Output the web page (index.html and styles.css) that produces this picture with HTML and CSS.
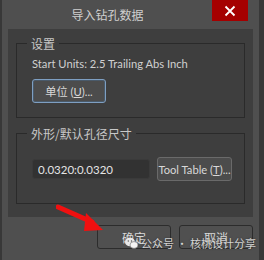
FILE: index.html
```html
<!DOCTYPE html>
<html lang="zh">
<head>
<meta charset="UTF-8">
<title>导入钻孔数据</title>
<link rel="stylesheet" href="styles.css">
</head>
<body>
<div class="window">
    <div class="titlebar">
        <span class="title">导入钻孔数据</span>
        <button class="close">
            <svg width="12" height="12" viewBox="0 0 12 12"><path d="M1.5 1.5 L10.5 10.5 M10.5 1.5 L1.5 10.5" stroke="#fff" stroke-width="1.8"/></svg>
        </button>
    </div>
    <div class="panel">
        <div class="group first">
            <div class="group-title">设置</div>
            <div class="units">Start Units: 2.5 Trailing Abs Inch</div>
            <button class="btn focus">单位 (<u>U</u>)...</button>
        </div>
        <div class="group second">
            <div class="group-title">外形/默认孔径尺寸</div>
            <div class="row">
                <input class="field" type="text" value="0.0320:0.0320">
                <button class="btn tool">Tool Table (<u>T</u>)...</button>
            </div>
        </div>
    </div>
    <div class="footer">
        <button class="btn action">确定</button>
        <button class="btn action">取消</button>
    </div>
    <svg class="arrow" width="60" height="34" viewBox="0 0 60 34">
        <path d="M2 3 L36 18" stroke="#f01010" stroke-width="5" stroke-linecap="round"/>
        <path d="M30 9 L47 26 L28 27 Z" fill="#f01010"/>
    </svg>
    <div class="watermark">
        <svg width="13" height="12" viewBox="0 0 13 12"><ellipse cx="5" cy="5" rx="5" ry="4.3" fill="#e8e8e8"/><ellipse cx="9" cy="8" rx="4" ry="3.4" fill="#f4f4f4" stroke="#666" stroke-width="0.6"/><circle cx="3.3" cy="4" r="0.7" fill="#555"/><circle cx="6.5" cy="4" r="0.7" fill="#555"/></svg>
        <span>公众号 · 核桃设计分享</span>
    </div>
</div>
</body>
</html>
```
FILE: styles.css
```css
body {
    margin: 0;
    background-color: #383838;
    font-family: Lato, "Noto Sans CJK SC", sans-serif;
    font-size: 11px;
    color: #d4d4d4;
}
.window {
    position: relative;
    width: 257px;
    height: 260px;
    margin-left: 2px;
    background-color: #4f4f4f;
    box-sizing: border-box;
    padding: 0 6px;
}
.titlebar {
    height: 29px;
    display: flex;
    justify-content: center;
    position: relative;
}
.title {
    font-family: "Noto Sans CJK SC", sans-serif;
    font-size: 12px;
    color: #cfcfcf;
    margin-top: 6px;
    margin-left: -46px;
}
.close {
    position: absolute;
    right: 5px;
    top: 0;
    width: 36px;
    height: 21px;
    background-color: #a50000;
    border: none;
    padding: 0;
    display: flex;
    align-items: center;
    justify-content: center;
}
.panel {
    background-color: #3e3e3e;
    height: 188px;
    padding: 14px 8px 0;
    box-sizing: border-box;
}
.group {
    border: 1px solid #2a2a2a;
    box-sizing: border-box;
    padding: 0 0 0 15px;
}
.group.first {
    height: 75px;
}
.group.second {
    height: 71px;
    margin-top: 15px;
}
.group-title {
    font-family: "Noto Sans CJK SC", sans-serif;
    font-size: 12px;
    color: #c8c8c8;
    background-color: #3e3e3e;
    width: fit-content;
    padding: 0 4px;
    margin: -9px 0 0 -5px;
    line-height: 17px;
}
.units {
    margin-top: 4px;
    line-height: 16px;
    font-size: 11.2px;
    color: #d0d0d0;
}
.btn {
    font-family: Lato, "Noto Sans CJK SC", sans-serif;
    font-size: 11.2px;
    color: #d8d8d8;
    background-color: #4c4c4c;
    border: 1px solid #6a6a6a;
    border-radius: 3px;
    padding: 0;
    height: 24px;
}
.btn.focus {
    width: 74px;
    margin-top: 7px;
    border-color: #7e9fc2;
    box-shadow: inset 0 0 0 1px #4a5a6a;
}
.row {
    display: flex;
    align-items: center;
    gap: 7px;
    margin-top: 15px;
}
.field {
    width: 118px;
    height: 20px;
    box-sizing: border-box;
    background-color: #323232;
    border: 1px solid #3a3a3a;
    border-radius: 3px;
    color: #e4e4e4;
    font-family: Lato, sans-serif;
    font-size: 11.5px;
    padding: 0 5px;
}
.btn.tool {
    width: 75px;
    white-space: nowrap;
}
.footer {
    display: flex;
    justify-content: flex-end;
    gap: 8px;
    padding-top: 8px;
}
.btn.action {
    width: 74px;
    font-family: "Noto Sans CJK SC", sans-serif;
    font-size: 12px;
    border-color: #2c2c2c;
    background-color: #505050;
}
.arrow {
    position: absolute;
    left: 54px;
    top: 204px;
}
.watermark {
    position: absolute;
    left: 123px;
    top: 235px;
    display: flex;
    align-items: center;
    gap: 3px;
    font-family: "Noto Sans CJK SC", sans-serif;
    font-size: 11px;
    color: rgba(240, 240, 240, 0.85);
    text-shadow: 0 0 2px rgba(0, 0, 0, 0.5);
}
```
